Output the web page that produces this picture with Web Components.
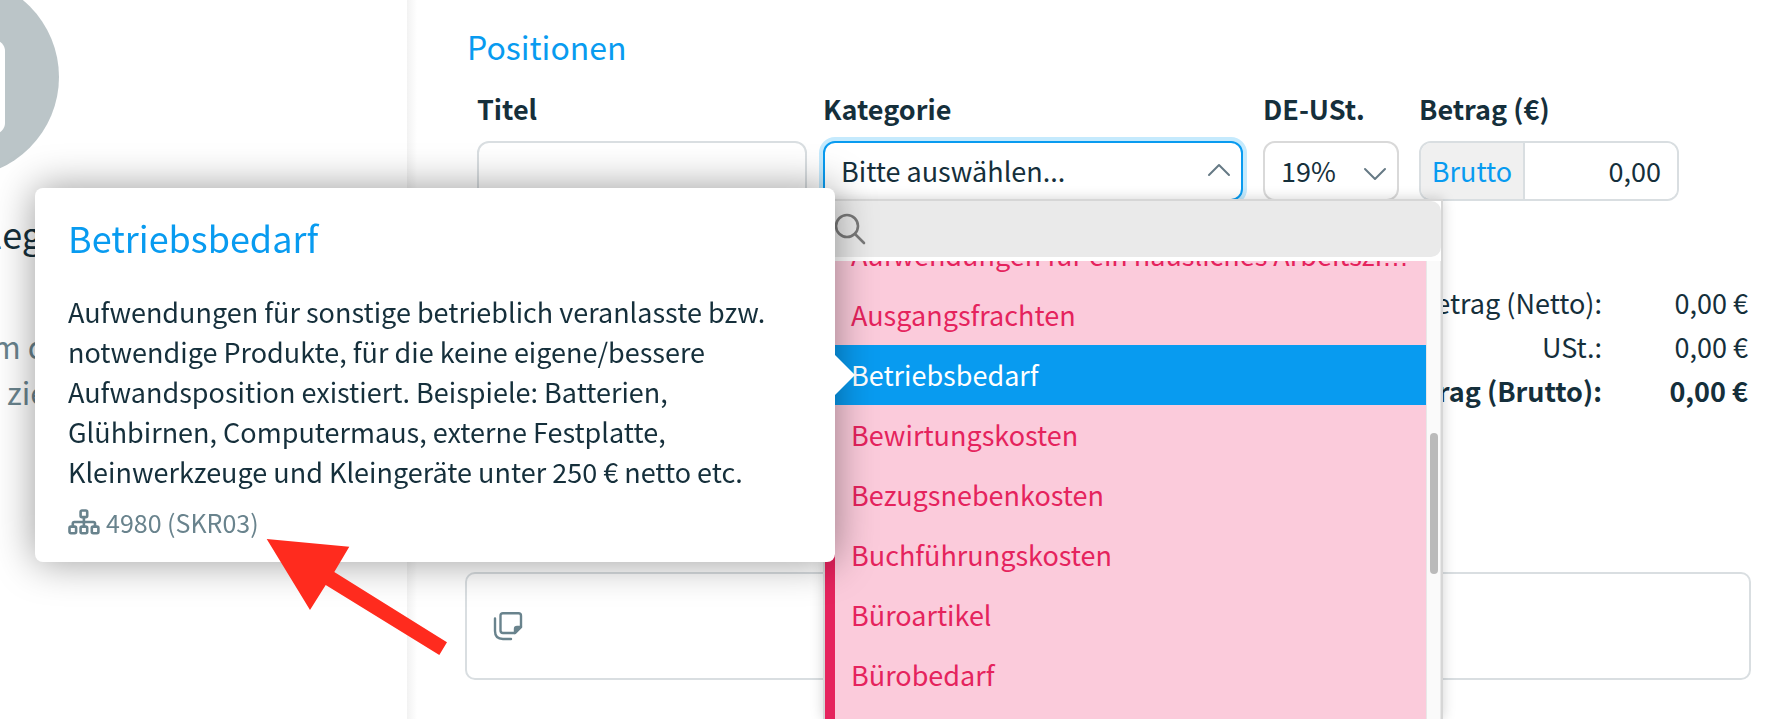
<!DOCTYPE html>
<html lang="de">
<head>
<meta charset="utf-8">
<title>Positionen</title>
<style>
  html, body { height: 100%; margin: 0; }
  body { overflow: hidden; background: #fff; color: #152f3b; font: 27px/40px "Noto Sans CJK SC", "Noto Sans", sans-serif; }
</style>
</head>
<body>
<expense-page></expense-page>
<script>
const define = (name, html, setup) => customElements.define(name, class extends HTMLElement {
  connectedCallback() {
    if (this.shadowRoot) return;
    const t = document.createElement('template');
    t.innerHTML = html;
    this.attachShadow({ mode: 'open' }).append(t.content.cloneNode(true));
    if (setup) setup(this, this.shadowRoot);
  }
});

define('receipt-panel', `
<style>
  :host { display: block; box-sizing: border-box; overflow: hidden; background: #fff; }
  .mark { display: block; width: 200px; height: 200px; margin: -23px 0 0 -141px; }
  h2 { margin: 32px 0 0 -8px; font-size: 36px; line-height: 48px; font-weight: 400; white-space: nowrap; }
  p { margin: 66px 0 0 -8px; font-size: 31px; line-height: 46px; color: #69838d; white-space: nowrap; }
  span { display: block; }
  .second { padding-left: 15px; }
</style>
<svg class="mark" viewBox="0 0 200 200" aria-hidden="true"><circle cx="100" cy="100" r="100" fill="#bbc5c8"/><rect x="55" y="63" width="91" height="94" rx="11" fill="#fff"/></svg>
<h2>leg</h2>
<p><span>m d</span><span class="second">zie</span></p>`);

define('form-field', `
<style>
  :host { display: block; min-width: 0; position: relative; }
  .label { display: block; font-weight: 700; line-height: 40px; margin-bottom: 12px; white-space: nowrap; }
</style>
<div class="label"></div><slot></slot>`, (el, root) => {
  root.querySelector('.label').textContent = el.getAttribute('label');
});

define('text-field', `
<style>
  :host { display: block; }
  input { box-sizing: border-box; display: block; width: 100%; height: 60px; border: 2px solid #d9dee1; border-radius: 12px; background: #fff; font: inherit; color: inherit; padding: 0 16px; outline: 0; }
</style>
<input type="text">`, (el, root) => root.querySelector('input').setAttribute('aria-label', el.getAttribute('name')));

define('tax-select', `
<style>
  :host { display: block; position: relative; }
  select { appearance: none; box-sizing: border-box; display: block; width: 100%; height: 60px; border: 2px solid #d9d9d9; border-radius: 12px; background: #fff; font: inherit; color: inherit; padding: 0 16px; outline: 0; }
  svg { position: absolute; right: 12px; top: 25px; width: 24px; height: 16px; pointer-events: none; }
</style>
<select aria-label="DE-USt."><option>19%</option></select>
<svg viewBox="0 0 24 16" fill="none" stroke="#667a85" stroke-width="2" stroke-linecap="round" stroke-linejoin="round"><path d="M2 3l10 10L22 3"/></svg>`);

define('amount-field', `
<style>
  :host { display: flex; box-sizing: border-box; height: 60px; border: 2px solid #d9dee1; border-radius: 12px; overflow: hidden; }
  button { flex: none; width: 104px; border: 0; border-right: 2px solid #d9dee1; background: #f0f0f0; color: #089bf0; font: inherit; padding: 0; }
  input { flex: 1; min-width: 0; border: 0; background: #fff; font: inherit; color: inherit; text-align: right; padding: 0 16px; outline: 0; }
</style>
<button type="button">Brutto</button><input type="text" value="0,00" aria-label="Betrag (€)">`);

define('category-option', `
<style>
  :host { display: block; height: 60px; line-height: 60px; padding: 0 16px; white-space: nowrap; overflow: hidden; color: #e5235d; }
  :host([aria-selected="true"]) { background: #089bf0; color: #fff; }
</style>
<slot></slot>`);

define('category-hint', `
<style>
  :host { display: block; box-sizing: border-box; width: 800px; padding: 23px 32px 20px 33px; border-radius: 8px; background: #fff; box-shadow: 0 0 40px rgba(0,0,0,.4); }
  .tip { position: absolute; left: 100%; top: 167px; width: 20px; height: 40px; background: #fff; clip-path: polygon(0 0, 100% 50%, 0 100%); }
  h3 { margin: 0 0 29px; font-size: 36px; line-height: 52px; font-weight: 400; color: #089bf0; }
  p { margin: 0; }
  .code { display: flex; align-items: center; gap: 6px; margin-top: 10px; font-size: 25px; line-height: 40px; color: #69838d; }
  .code svg { width: 32px; height: 26px; }
  .arrow { position: absolute; left: 231px; top: 350px; width: 183px; height: 119px; }
</style>
<h3>Betriebsbedarf</h3>
<p><slot></slot></p>
<div class="code"><svg viewBox="0 0 32 26" fill="none" stroke="currentColor" stroke-width="2.6"><rect x="12.6" y="1.5" width="6.6" height="6.6" rx="1.4"/><rect x="1.5" y="17.6" width="6.6" height="6.6" rx="1.4"/><rect x="12.6" y="17.6" width="6.6" height="6.6" rx="1.4"/><rect x="23.8" y="17.6" width="6.6" height="6.6" rx="1.4"/><path d="M15.9 8v9.6M4.8 17.6v-3q0-1.6 1.6-1.6h19q1.6 0 1.6 1.6v3"/></svg><span>4980 (SKR03)</span></div>
<div class="tip"></div>
<svg class="arrow" viewBox="0 0 183 119" aria-hidden="true"><path fill="#ff2b1e" d="M.7 1L83.3 8.7 68.3 34 181 104.3 173.3 117 59.7 47 44 72z"/></svg>`);

define('category-menu', `
<style>
  :host { display: flex; flex-direction: column; box-sizing: border-box; background: #fff; border: 2px solid #d6d6d6; border-bottom: 0; box-shadow: 0 0 12px rgba(0,0,0,.18); }
  .search { flex: none; display: flex; align-items: center; gap: 8px; height: 56px; padding-left: 9px; margin-bottom: 4px; background: #eaeaea; border-radius: 10px; }
  .search svg { width: 32px; height: 32px; }
  .search input { flex: 1; border: 0; background: none; font: inherit; outline: 0; }
  .body { flex: 1; min-height: 0; display: flex; }
  .list { flex: 1; min-width: 0; overflow-y: auto; scrollbar-width: none; border-left: 10px solid #e5235d; background: #fbcbdb; }
  .list::after { content: ""; display: block; height: 100%; }
  .track { flex: none; box-sizing: border-box; width: 15px; padding: 172px 3px 0; background: #fafafa; border: solid #e8e8e8; border-width: 0 1px; }
  .thumb { height: 141px; width: 8px; border-radius: 4px; background: #bababa; }
  .ell { font-family: "Liberation Sans", sans-serif; }
  category-hint { position: absolute; right: calc(100% - 10px); top: -13px; }
</style>
<label class="search"><svg viewBox="0 0 32 32" fill="none" stroke="#7a7a7a" stroke-width="2.6" stroke-linecap="round"><circle cx="13" cy="13" r="11"/><path d="M21 21l9 9"/></svg><input type="text" aria-label="Suche"></label>
<div class="body">
  <div class="list" role="listbox" aria-label="Kategorie">
    <category-option role="option">Aufwendungen für ein häusliches Arbeitszi<span class="ell">…</span></category-option>
    <category-option role="option">Ausgangsfrachten</category-option>
    <category-option role="option" aria-selected="true">Betriebsbedarf</category-option>
    <category-option role="option">Bewirtungskosten</category-option>
    <category-option role="option">Bezugsnebenkosten</category-option>
    <category-option role="option">Buchführungskosten</category-option>
    <category-option role="option">Büroartikel</category-option>
    <category-option role="option">Bürobedarf</category-option>
  </div>
  <div class="track"><div class="thumb"></div></div>
</div>
<category-hint>Aufwendungen für sonstige betrieblich veranlasste bzw. notwendige Produkte, für die keine eigene/bessere Aufwandsposition existiert. Beispiele: Batterien, Glühbirnen, Computermaus, externe Festplatte, Kleinwerkzeuge und Kleingeräte unter 250 € netto etc.</category-hint>`, (el, root) => { root.querySelector('.list').scrollTop = 36; });

define('category-select', `
<style>
  :host { display: block; position: relative; }
  button { box-sizing: border-box; display: flex; align-items: center; justify-content: space-between; width: 100%; height: 60px; border: 2px solid #089bf0; border-radius: 12px; background: #fff; font: inherit; color: inherit; padding: 0 10px 0 16px; box-shadow: 0 0 0 4px #c5eafd; outline: 0; }
  button svg { width: 24px; height: 16px; }
  category-menu { position: absolute; z-index: 2; left: 0; top: calc(100% - 2px); width: 620px; height: calc(100vh - 199px); }
</style>
<button type="button" aria-haspopup="listbox" aria-expanded="true"><span>Bitte auswählen...</span><svg viewBox="0 0 24 16" fill="none" stroke="#667a85" stroke-width="2" stroke-linecap="round" stroke-linejoin="round"><path d="M2 12L12 2l10 10"/></svg></button>
<category-menu></category-menu>`);

define('position-totals', `
<style>
  :host { display: block; }
  table { margin-left: auto; border-collapse: collapse; line-height: 44px; text-align: right; }
  td, th { padding: 0; font-weight: 400; white-space: nowrap; }
  td { width: 146px; }
  .sum th, .sum td { font-weight: 700; }
</style>
<table>
  <tr><th scope="row">Betrag (Netto):</th><td>0,00 €</td></tr>
  <tr><th scope="row">USt.:</th><td>0,00 €</td></tr>
  <tr class="sum"><th scope="row">Betrag (Brutto):</th><td>0,00 €</td></tr>
</table>`);

define('note-box', `
<style>
  :host { display: flex; align-items: center; box-sizing: border-box; height: 108px; padding-left: 26px; border: 2px solid #d9dee1; border-radius: 10px; background: #fff; }
  button { display: block; border: 0; padding: 0; background: none; color: #69838d; }
  svg { display: block; width: 30px; height: 30px; }
</style>
<button type="button" aria-label="Notiz"><svg viewBox="0 0 30 30" fill="none" stroke="currentColor" stroke-width="2.4" stroke-linecap="round" stroke-linejoin="round"><path d="M10 2.2h15.500q2.500 0 2.500 2.500V16l-6 6H10q-2.500 0-2.500-2.500V4.700q0-2.500 2.500-2.500z"/><path d="M28 16h-4q-2 0-2 2v4z" fill="currentColor"/><path d="M2 7.500V20q0 8 8 8h8"/></svg></button>`);

define('expense-page', `
<style>
  :host { display: grid; grid-template-columns: 407px minmax(0, 1fr); min-height: 100%; }
  main { box-sizing: border-box; padding: 22px 34px 0 58px; background: linear-gradient(90deg, #f2f2f2, #fff 10px); }
  h1 { margin: 0 0 19px 2px; font-size: 32px; line-height: 48px; font-weight: 400; color: #089bf0; }
  .row { display: grid; grid-template-columns: 346fr 440fr 156fr 332fr; margin-left: 12px; }
  .row > * { padding-right: 20px; }
  .row > :first-child { padding-right: 16px; }
  .row > :last-child { padding-right: 72px; }
  position-totals { margin: 80px 3px 0 0; }
  note-box { margin-top: 159px; }
</style>
<receipt-panel></receipt-panel>
<main>
  <h1>Positionen</h1>
  <div class="row">
    <form-field label="Titel"><text-field name="Titel"></text-field></form-field>
    <form-field label="Kategorie"><category-select></category-select></form-field>
    <form-field label="DE-USt."><tax-select></tax-select></form-field>
    <form-field label="Betrag (€)"><amount-field></amount-field></form-field>
  </div>
  <position-totals></position-totals>
  <note-box></note-box>
</main>`);
</script>
</body>
</html>
